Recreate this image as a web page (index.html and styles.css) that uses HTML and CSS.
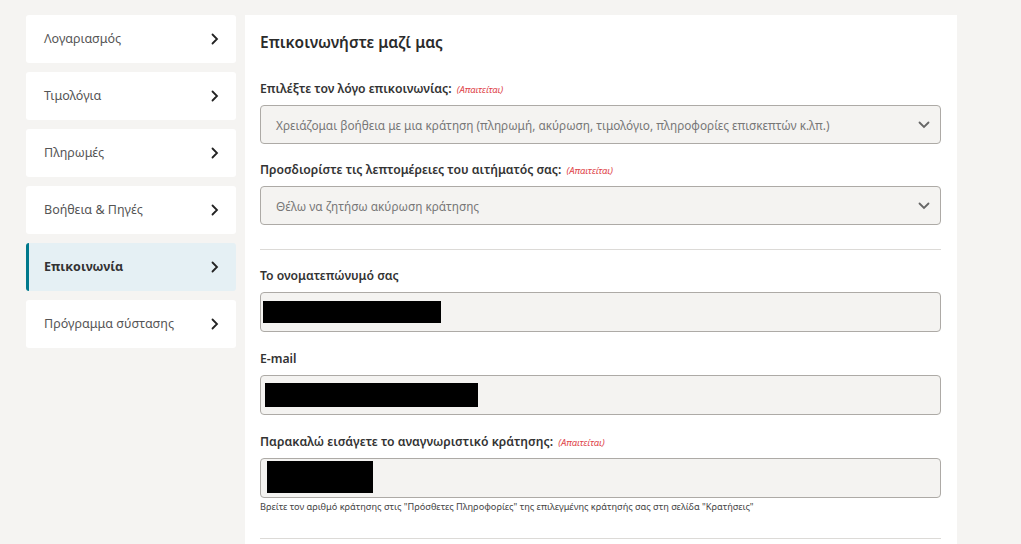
FILE: index.html
```html
<!DOCTYPE html>
<html>
	<head>
		<meta charset="utf-8">
		<title>Επικοινωνία</title>
		<link rel="stylesheet" href="styles.css">
	</head>

	<body>
		<div class="layout">
			<nav class="side">
				<a class="side-item" href="#">
					<span>Λογαριασμός</span>
					<svg class="chev" viewBox="0 0 8 12" width="8" height="12"><path d="M1.5 1.5 6 6l-4.5 4.5" /></svg>
				</a>
				<a class="side-item" href="#">
					<span>Τιμολόγια</span>
					<svg class="chev" viewBox="0 0 8 12" width="8" height="12"><path d="M1.5 1.5 6 6l-4.5 4.5" /></svg>
				</a>
				<a class="side-item" href="#">
					<span>Πληρωμές</span>
					<svg class="chev" viewBox="0 0 8 12" width="8" height="12"><path d="M1.5 1.5 6 6l-4.5 4.5" /></svg>
				</a>
				<a class="side-item" href="#">
					<span>Βοήθεια &amp; Πηγές</span>
					<svg class="chev" viewBox="0 0 8 12" width="8" height="12"><path d="M1.5 1.5 6 6l-4.5 4.5" /></svg>
				</a>
				<a class="side-item is-active" href="#">
					<span>Επικοινωνία</span>
					<svg class="chev" viewBox="0 0 8 12" width="8" height="12"><path d="M1.5 1.5 6 6l-4.5 4.5" /></svg>
				</a>
				<a class="side-item" href="#">
					<span>Πρόγραμμα σύστασης</span>
					<svg class="chev" viewBox="0 0 8 12" width="8" height="12"><path d="M1.5 1.5 6 6l-4.5 4.5" /></svg>
				</a>
			</nav>

			<main class="panel">
				<h1 class="panel-title">Επικοινωνήστε μαζί μας</h1>

				<form class="contact">
					<div class="field">
						<label class="field-label">Επιλέξτε τον λόγο επικοινωνίας: <em class="req">(Απαιτείται)</em></label>
						<div class="select">
							<span>Χρειάζομαι βοήθεια με μια κράτηση (πληρωμή, ακύρωση, τιμολόγιο, πληροφορίες επισκεπτών κ.λπ.)</span>
							<svg class="caret" viewBox="0 0 12 8" width="12" height="8"><path d="M1.5 1.5 6 6l4.5-4.5" /></svg>
						</div>
					</div>

					<div class="field">
						<label class="field-label">Προσδιορίστε τις λεπτομέρειες του αιτήματός σας: <em class="req">(Απαιτείται)</em></label>
						<div class="select">
							<span>Θέλω να ζητήσω ακύρωση κράτησης</span>
							<svg class="caret" viewBox="0 0 12 8" width="12" height="8"><path d="M1.5 1.5 6 6l4.5-4.5" /></svg>
						</div>
					</div>

					<hr class="rule">

					<div class="field">
						<label class="field-label">Το ονοματεπώνυμό σας</label>
						<div class="input"><span class="redact redact-name"></span></div>
					</div>

					<div class="field">
						<label class="field-label">E-mail</label>
						<div class="input"><span class="redact redact-mail"></span></div>
					</div>

					<div class="field">
						<label class="field-label">Παρακαλώ εισάγετε το αναγνωριστικό κράτησης: <em class="req">(Απαιτείται)</em></label>
						<div class="input"><span class="redact redact-id"></span></div>
						<p class="hint">Βρείτε τον αριθμό κράτησης στις "Πρόσθετες Πληροφορίες" της επιλεγμένης κράτησής σας στη σελίδα "Κρατήσεις"</p>
					</div>

					<hr class="rule rule-end">
				</form>
			</main>
		</div>
	</body>
</html>
```

FILE: styles.css
```css
:root {
	box-sizing: border-box;
}

*, *::before, *::after {
	box-sizing: inherit;
}

html, body {
	margin: 0;
	height: 100%;
	overflow: hidden;
}

body {
	background-color: #f5f4f2;
	font-family: "Noto Sans", "DejaVu Sans", sans-serif;
	color: #333;
}

.layout {
	display: flex;
	align-items: flex-start;
	gap: 9px;
	padding: 15px 0 0 26px;
}

/* side menu */
.side {
	display: flex;
	flex-direction: column;
	gap: 9px;
	width: 210px;
	flex-shrink: 0;
}

.side-item {
	display: flex;
	align-items: center;
	justify-content: space-between;
	height: 48px;
	padding: 0 17px 1px 18px;

	background-color: #fff;
	border-radius: 3px;
	color: #555;
	font-size: 12.5px;
	text-decoration: none;

	&.is-active {
		background-color: #e5f0f4;
		border-left: 3px solid #00798c;
		padding-left: 15px;
		color: #333;
		font-weight: 700;
	}
}

.chev {
	fill: none;
	stroke: #222;
	stroke-width: 1.8;
	stroke-linecap: round;
}

/* main panel */
.panel {
	width: 712px;
	min-height: 560px;
	padding: 16px 16px 0 15px;
	background-color: #fff;
}

.panel-title {
	margin: 0 0 28px;
	font-size: 15.5px;
	font-weight: 600;
	line-height: 22px;
	color: #2b2b2b;
}

.contact {
	display: flex;
	flex-direction: column;
	gap: 18px;
}

.field {
	display: flex;
	flex-direction: column;
	gap: 8px;
}

.field-label {
	font-size: 12.2px;
	font-weight: 600;
	line-height: 16px;
	color: #333;
}

.req {
	margin-left: 2px;
	font-size: 9.5px;
	font-weight: 400;
	line-height: 1;
	color: #e0474c;
}

.select,
.input {
	display: flex;
	align-items: center;
	height: 39px;
	background-color: #f4f3f1;
	border: 1px solid #adaaa6;
	border-radius: 4px;
}

.select {
	justify-content: space-between;
	padding: 0 10px 0 15px;
	font-size: 11.8px;
	color: #777;
}

.input {
	height: 40px;
	margin-bottom: 1px;
	padding: 0 2px;
}

.caret {
	fill: none;
	stroke: #666;
	stroke-width: 1.8;
	stroke-linecap: round;
}

.redact {
	display: block;
	background-color: #000;
}

.redact-name {
	width: 178px;
	height: 22px;
}

.redact-mail {
	width: 213px;
	height: 24px;
	margin-left: 2px;
}

.redact-id {
	width: 106px;
	height: 32px;
	margin-left: 4px;
	align-self: flex-start;
	margin-top: 2px;
}

.hint {
	margin: -6px 0 0;
	font-size: 9.2px;
	line-height: 12px;
	color: #444;
}

.rule {
	width: 100%;
	margin: 6px 0 0;
	border: 0;
	border-top: 1px solid #dcdad7;
}

.rule-end {
	margin-top: 7px;
}
```
